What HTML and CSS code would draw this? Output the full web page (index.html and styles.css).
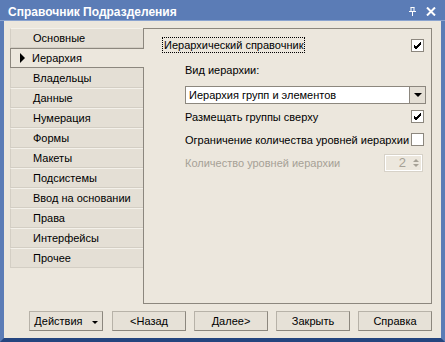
FILE: index.html
```html
<!DOCTYPE html>
<html lang="ru">
<head>
  <meta charset="UTF-8">
  <title>Справочник Подразделения</title>
  <link rel="stylesheet" href="styles.css">
</head>
<body>
  <div class="window">
    <div class="titlebar">
      <span class="title">Справочник Подразделения</span>
      <div class="title-icons">
        <svg width="7" height="9" viewBox="0 0 7 9"><path d="M1.5 0.5h4M2 0.5v4M5 0.5v4M0 4.5h7M3.5 4.5v4.5" stroke="#fff" fill="none"/></svg>
        <svg width="10" height="9" viewBox="0 0 10 9"><path d="M1 0.5l8 8M9 0.5l-8 8" stroke="#fff" stroke-width="2" fill="none"/></svg>
      </div>
    </div>

    <div class="content">
      <div class="main">
        <ul class="tabs">
          <li class="tab">Основные</li>
          <li class="tab tab-active"><span class="marker"></span>Иерархия</li>
          <li class="tab">Владельцы</li>
          <li class="tab">Данные</li>
          <li class="tab">Нумерация</li>
          <li class="tab">Формы</li>
          <li class="tab">Макеты</li>
          <li class="tab">Подсистемы</li>
          <li class="tab">Ввод на основании</li>
          <li class="tab">Права</li>
          <li class="tab">Интерфейсы</li>
          <li class="tab">Прочее</li>
        </ul>

        <div class="panel">
          <div class="row row-first">
            <span class="focused">Иерархический справочник</span>
            <span class="checkbox checked"></span>
          </div>
          <div class="label">Вид иерархии:</div>
          <div class="select">
            <span class="select-value">Иерархия групп и элементов</span>
            <span class="select-button"><i class="arrow-down"></i></span>
          </div>
          <div class="row row-indent">
            <span>Размещать группы сверху</span>
            <span class="checkbox checked"></span>
          </div>
          <div class="row row-indent">
            <span>Ограничение количества уровней иерархии</span>
            <span class="checkbox"></span>
          </div>
          <div class="row row-indent disabled">
            <span>Количество уровней иерархии</span>
            <span class="spin">
              <span class="spin-value">2</span>
              <span class="spin-arrows"><i class="tri-up"></i><i class="tri-down"></i></span>
            </span>
          </div>
        </div>
      </div>

      <div class="buttons">
        <button class="btn">Действия <i class="arrow-down small"></i></button>
        <button class="btn">&lt;Назад</button>
        <button class="btn">Далее&gt;</button>
        <button class="btn">Закрыть</button>
        <button class="btn">Справка</button>
      </div>
    </div>
  </div>
</body>
</html>
```

FILE: styles.css
```css
* {
  margin: 0;
  padding: 0;

  box-sizing: border-box;
  font-family: 'Liberation Sans', Arial, sans-serif;
}

body {
  width: 445px;
  height: 342px;
  overflow: hidden;
}

ul {
  list-style: none;
}

.window {
  display: flex;
  flex-direction: column;

  width: 445px;
  height: 342px;

  background: #ece7dd;
  border: 4px solid #5b7cb6;
  border-top: none;
  border-bottom-color: #24457f;
}

/* Title bar */
.titlebar {
  display: flex;
  align-items: center;
  justify-content: space-between;

  height: 21px;
  margin: 0 -4px;
  padding: 3px 9px 0 8px;

  background: #5b7cb6;
  color: #fff;
  border-bottom: 1px solid #8aa3cf;
}

.title {
  font-size: 12px;
  font-weight: bold;
}

.title-icons {
  display: flex;
  align-items: center;
  gap: 10px;
}

/* Body */
.content {
  display: flex;
  flex-direction: column;
  flex: 1;

  padding: 7px 9px 7px 6px;
}

.main {
  display: flex;
  height: 276px;
}

.tabs {
  display: flex;
  flex-direction: column;
  width: 133px;
}

.tab {
  display: flex;
  align-items: center;

  height: 20px;
  padding-left: 22px;

  font-size: 11px;
  color: #000;

  background: #e4dfd5;
  border: 1px solid #d3cec4;
  border-right: none;
  border-top-color: #f4f1ea;
}

.tab-active {
  position: relative;
  z-index: 1;
  width: 134px;
  margin-right: -1px;
  padding-left: 9px;

  background: #ece7dd;
  border-color: #8c877e;
}

.tab-active + .tab {
  border-top: none;
}

.marker {
  width: 0;
  height: 0;
  margin-right: 7px;

  border-top: 5px solid transparent;
  border-bottom: 5px solid transparent;
  border-left: 5px solid #000;
}

.panel {
  flex: 1;
  padding: 8px 5px 0 19px;

  border: 1px solid #8c877e;
  font-size: 11px;
}

.row {
  display: flex;
  align-items: center;
  justify-content: space-between;

  height: 23px;
}

.row-first {
  height: 16px;
  margin-bottom: 11px;
}

.row-indent {
  padding-left: 22px;
}

.focused {
  padding: 0 1px;
  margin-left: -1px;
  border: 1px dotted #000;
  line-height: 14px;
}

.label {
  height: 22px;
  padding-left: 22px;
}

.select {
  display: flex;
  height: 18px;
  margin: 0 0 1px 22px;

  background: #fff;
  border: 1px solid #8c877e;
}

.select-value {
  flex: 1;
  padding-left: 3px;
  line-height: 16px;
}

.select-button {
  display: flex;
  align-items: center;
  justify-content: center;

  width: 16px;
  background: #e4dfd5;
  border-left: 1px solid #8c877e;
}

.arrow-down {
  display: inline-block;
  width: 0;
  height: 0;

  border-left: 4px solid transparent;
  border-right: 4px solid transparent;
  border-top: 4px solid #000;
}

.arrow-down.small {
  margin-left: 6px;
  border-left-width: 3px;
  border-right-width: 3px;
  border-top-width: 3px;
  vertical-align: middle;
}

.checkbox {
  width: 13px;
  height: 13px;
  margin-right: 2px;

  background: #fff;
  border: 1px solid #8c877e;
}

.checked {
  background: #fff url("data:image/svg+xml,%3Csvg xmlns='http://www.w3.org/2000/svg' width='11' height='11'%3E%3Cpath d='M2 5l2 2 5-5M2 6l2 2 5-5M2 7l2 2 5-5' stroke='%23000' stroke-width='1' fill='none'/%3E%3C/svg%3E") no-repeat center;
}

.disabled {
  color: #a6a196;
}

.spin {
  display: flex;
  width: 39px;
  height: 18px;
  margin-right: 3px;

  background: #ece7dd;
  border: 1px solid #d7d2c8;
  outline: 1px solid #fff;
  outline-offset: -2px;
}

.spin-value {
  flex: 1;
  padding-right: 3px;
  text-align: right;
  line-height: 16px;
  font-size: 13px;
}

.spin-arrows {
  display: flex;
  flex-direction: column;
  align-items: center;
  justify-content: space-around;

  width: 13px;
  padding: 3px 0;
}

.tri-up,
.tri-down {
  width: 0;
  height: 0;
  border-left: 3px solid transparent;
  border-right: 3px solid transparent;
}

.tri-up {
  border-bottom: 3px solid #a6a196;
}

.tri-down {
  border-top: 3px solid #a6a196;
}

/* Buttons */
.buttons {
  display: flex;
  justify-content: flex-end;
  gap: 8px;

  margin-top: 7px;
}

.btn {
  width: 74px;
  height: 20px;

  font-size: 11px;
  color: #000;
  background: #e6e1d7;
  border: 1px solid #8c877e;
  border-top-color: #b7b2a8;
  border-left-color: #b7b2a8;
}

.btn:first-child {
  margin-right: 1px;
}
```
